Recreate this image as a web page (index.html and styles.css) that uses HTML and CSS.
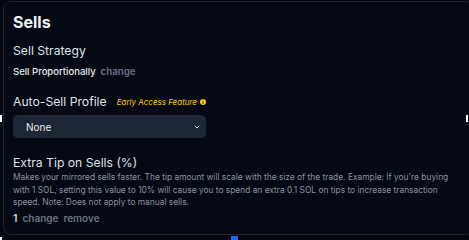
FILE: index.html
```html
<!DOCTYPE html>
<html>
<head>
<meta charset="utf-8">
<link rel="stylesheet" href="styles.css">
</head>
<body>
<div class="card">
  <h2 class="title">Sells</h2>
  <section class="group g-strategy">
    <h3 class="label">Sell Strategy</h3>
    <div class="value-row"><span class="value">Sell Proportionally</span><span class="link">change</span></div>
  </section>
  <section class="group g-profile">
    <div class="label-row"><h3 class="label">Auto-Sell Profile</h3><span class="early">Early Access Feature</span><span class="info">i</span></div>
    <div class="select"><span>None</span>
      <svg class="chev" width="6" height="4" viewBox="0 0 6 4"><path d="M0.8 0.8 L3 3 L5.2 0.8" fill="none" stroke="#cbd5e1" stroke-width="1"/></svg>
    </div>
  </section>
  <section class="group g-tip">
    <h3 class="label">Extra Tip on Sells (%)</h3>
    <p class="desc">Makes your mirrored sells faster. The tip amount will scale with the size of the trade. Example: If you're buying with 1 SOL, setting this value to 10% will cause you to spend an extra 0.1 SOL on tips to increase transaction speed. Note: Does not apply to manual sells.</p>
    <div class="value-row tip-row"><span class="num">1</span><span class="link big">change</span><span class="link big">remove</span></div>
  </section>
</div>
<span class="handle h-left"></span>
<span class="handle h-right"></span>
<span class="handle h-bl"></span>
<span class="handle h-bottom"></span>
</body>
</html>
```
FILE: styles.css
```css
html, body { margin: 0; padding: 0; }
body {
  background: #04070e;
  width: 469px;
  height: 240px;
  overflow: hidden;
  position: relative;
  font-family: Inter, "Noto Sans", sans-serif;
  color: #e5e7eb;
}
.card {
  position: absolute;
  left: 3px; top: 1px;
  width: 461px; height: 232px;
  border: 1px solid #1c2230;
  border-radius: 8px;
  background: #050914;
  box-sizing: content-box;
  padding: 0 0 0 9px;
}
.title {
  margin: 0;
  padding-top: 10px;
  font-size: 16px;
  font-weight: 700;
  line-height: 20px;
  color: #eef0f3;
}
.label {
  margin: 0;
  font-size: 12.2px;
  font-weight: 400;
  line-height: 16px;
  color: #dfe2e7;
}
.g-strategy { margin-top: 11px; }
.value-row { display: flex; gap: 5px; align-items: baseline; margin-top: 7px; line-height: 12px; }
.value { font-size: 9.5px; font-weight: 500; color: #e5e7eb; }
.link { font-size: 9.7px; font-weight: 600; color: #6b7280; }
.g-profile { margin-top: 16px; }
.label-row { display: flex; align-items: center; }
.early { font-size: 8px; font-style: italic; color: #facc15; margin-left: 10px; }
.info {
  width: 6px; height: 6px; border-radius: 50%;
  background: #facc15; color: #000; font-size: 5px; line-height: 6px;
  text-align: center; font-weight: 700; margin-left: 3px;
}
.select {
  margin-top: 5px;
  width: 193px; height: 23px;
  border-radius: 5px;
  background: #1e2735;
  display: flex; align-items: center; justify-content: space-between;
  padding: 0 6px 0 13px; box-sizing: border-box;
  font-size: 10px; color: #e5e7eb;
}
.g-tip { margin-top: 17px; }
.desc {
  margin: 0;
  font-size: 8.4px;
  line-height: 12.5px;
  color: #8b919b;
  width: 446px;
}
.tip-row { margin-top: 3px; gap: 5px; }
.num { font-size: 10.5px; font-weight: 600; color: #d1d5db; }
.link.big { font-size: 10px; }
.handle { position: absolute; background: #fff; }
.h-left { left: 0; top: 115px; width: 2px; height: 7px; }
.h-right { left: 466px; top: 115px; width: 2px; height: 7px; }
.h-bl { left: 0; top: 237px; width: 2px; height: 3px; }
.h-bottom { left: 231px; top: 236px; width: 7px; height: 4px; background: #2563eb; }
```
